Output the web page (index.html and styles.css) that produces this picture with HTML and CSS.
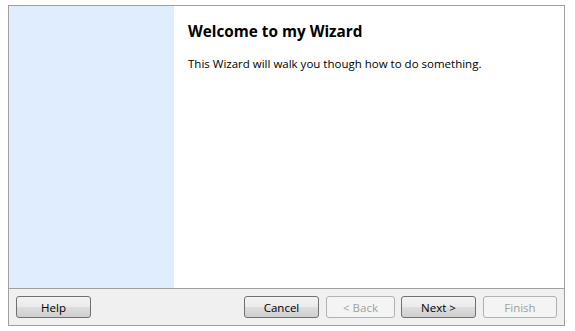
FILE: index.html
```html
<!DOCTYPE html>
<html>
<head>
  <meta charset="UTF-8" />
  <title>Wizard</title>
  <link rel="stylesheet" href="styles.css">
</head>
<body>
  <div class="wizard">
    <div class="main">
      <div class="side"></div>
      <div class="page">
        <h1>Welcome to my Wizard</h1>
        <p>This Wizard will walk you though how to do something.</p>
      </div>
    </div>
    <div class="footer">
      <button class="help">Help</button>
      <div class="nav">
        <button>Cancel</button>
        <button disabled class="back">&lt; Back</button>
        <button class="next">Next &gt;</button>
        <button disabled class="finish">Finish</button>
      </div>
    </div>
  </div>
</body>
</html>
```

FILE: styles.css
```css
* {
  box-sizing: border-box;
  font-family: "Open Sans", "Noto Sans", sans-serif;
}

body {
  margin: 5px 10px 5px 8px;
  background: #fff;
}

.wizard {
  height: 321px;
  border: 1px solid #a0a0a0;
  display: flex;
  flex-direction: column;
}

.main {
  flex: 1;
  display: flex;
}

.side {
  width: 165px;
  background: #e0edfe;
}

.page {
  flex: 1;
  background: #fff;
  padding: 15px 14px;
}

h1 {
  margin: 0 0 15px;
  font-size: 15.3px;
  font-weight: 700;
  color: #000;
}

p {
  margin: 0;
  font-size: 11.5px;
  color: #000;
}

.footer {
  height: 37px;
  border-top: 1px solid #a0a0a0;
  background: #f0f0f0;
  display: flex;
  justify-content: space-between;
  align-items: center;
  padding: 0 7px;
}

.nav {
  display: flex;
}

button {
  width: 75px;
  height: 22px;
  padding: 0;
  font-size: 11.5px;
  color: #000;
  border: 1px solid #707070;
  border-radius: 3px;
  background: linear-gradient(#f2f2f2 0%, #ebebeb 50%, #dddddd 51%, #cfcfcf 100%);
}

button:disabled {
  color: #a0a0a0;
  border-color: #adb2b5;
  background: #f4f4f4;
}

.back { width: 69px; margin-left: 7px; }
.next { margin-left: 6px; }
.finish { width: 74px; margin-left: 7px; }
```
